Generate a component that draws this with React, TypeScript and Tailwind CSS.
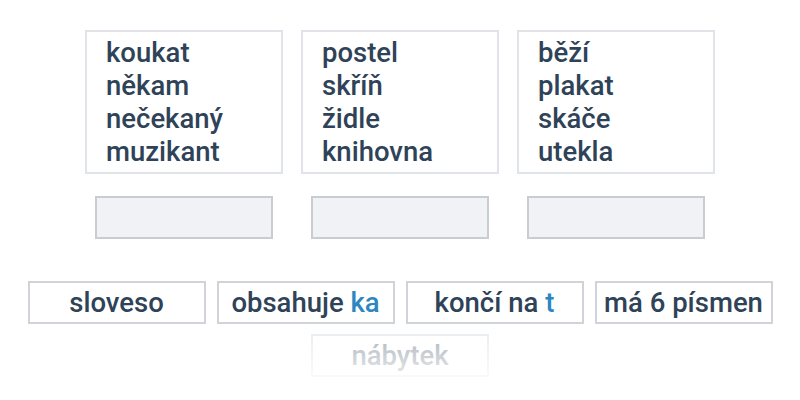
import React from "react";

const cols = [
  ["koukat", "někam", "nečekaný", "muzikant"],
  ["postel", "skříň", "židle", "knihovna"],
  ["běží", "plakat", "skáče", "utekla"],
];

export default function App() {
  return (
    <div
      className="relative w-[800px] h-[400px] bg-white overflow-hidden text-[#2f4358]"
      style={{ fontFamily: "Roboto, 'Noto Sans', sans-serif" }}
    >
      <div className="flex justify-center gap-[18px] pt-[30px]">
        {cols.map((c, i) => (
          <div key={i} className="flex flex-col items-center gap-[22px]">
            <div className="w-[198px] h-[144px] border-2 border-[#e0e4e8] pl-[19px] pt-[4px] text-[27.5px] leading-[33px] font-medium">
              {c.map((w) => (
                <div key={w}>{w}</div>
              ))}
            </div>
            <div className="w-[178px] h-[43px] border-2 border-[#c8cdd2] bg-[#f0f2f6]" />
          </div>
        ))}
      </div>
      <div className="flex justify-center gap-[11px] mt-[42px] text-[27.5px] font-medium">
        <Chip>sloveso</Chip>
        <Chip>
          obsahuje <span className="text-[#2e86c1]">ka</span>
        </Chip>
        <Chip>
          končí na <span className="text-[#2e86c1]">t</span>
        </Chip>
        <Chip>má 6 písmen</Chip>
      </div>
      <div className="flex justify-center mt-[10px] text-[27.5px] font-medium">
        <Chip>nábytek</Chip>
      </div>
      <div className="absolute left-0 right-0 top-[326px] h-[74px] bg-gradient-to-b from-white/55 via-white/80 to-white" />
    </div>
  );
}

function Chip({ children }: { children: React.ReactNode }) {
  return (
    <div className="w-[178px] h-[43px] border-2 border-[#d0d4d8] bg-white flex items-center justify-center whitespace-nowrap">
      <span>{children}</span>
    </div>
  );
}
